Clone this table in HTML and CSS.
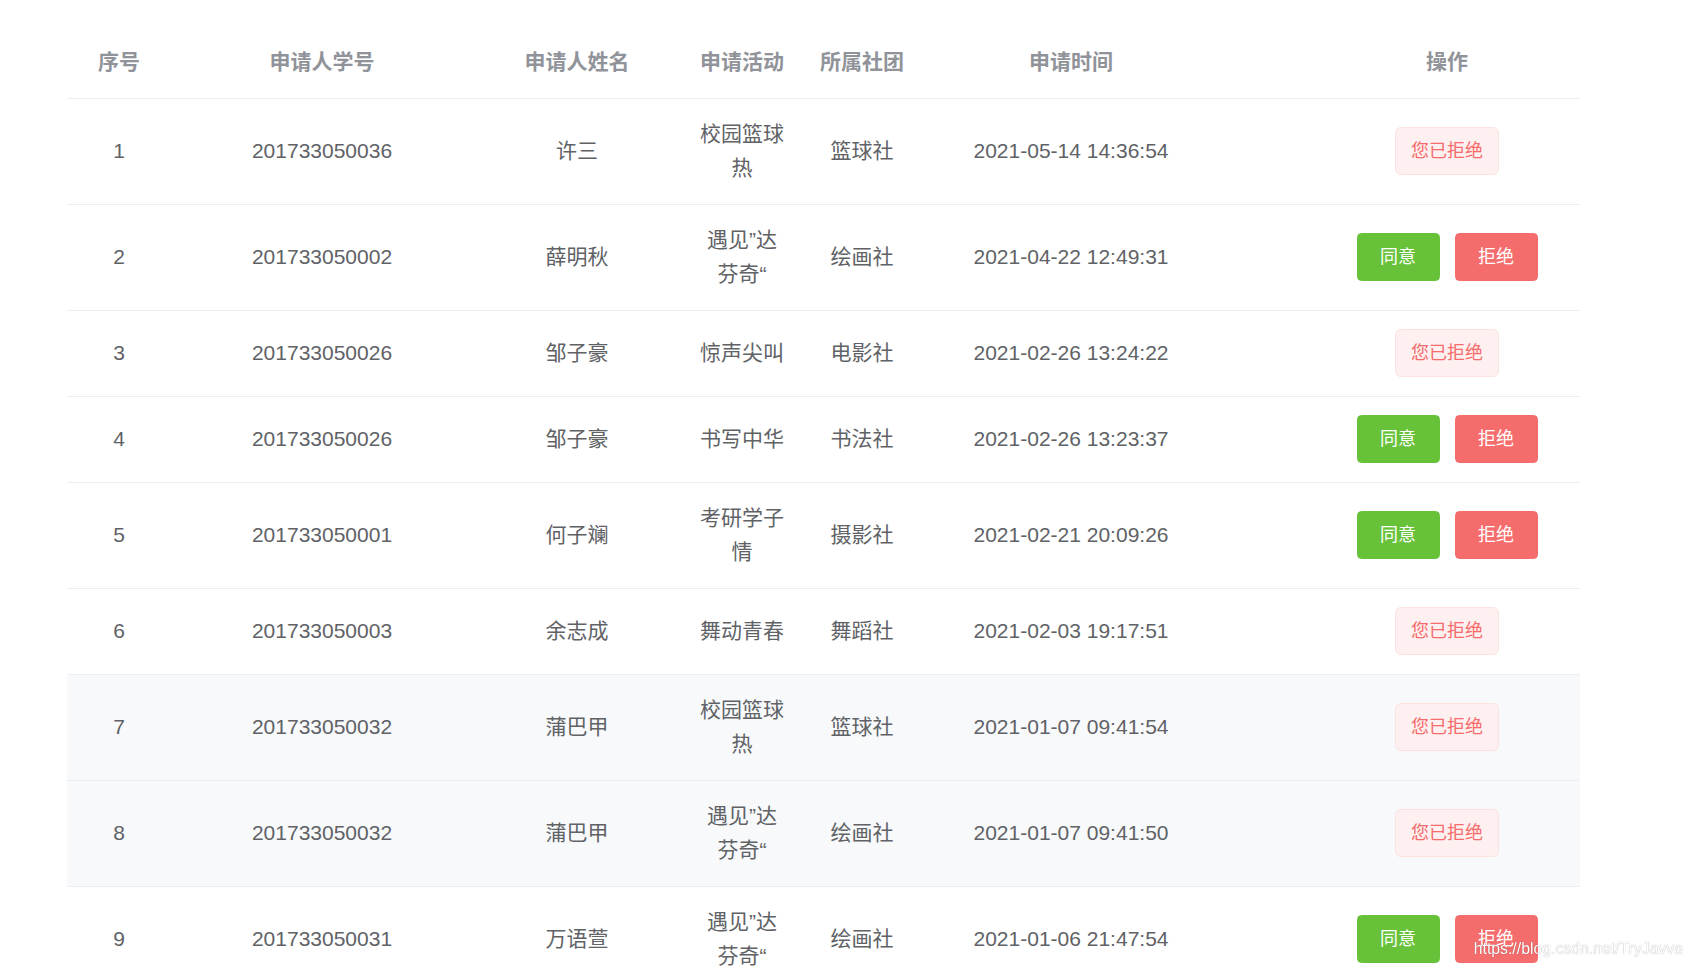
FILE: index.html
```html
<!DOCTYPE html>
<html lang="zh-CN">
<head>
<meta charset="utf-8">
<title>申请列表</title>
<link rel="stylesheet" href="styles.css">
</head>
<body>
<div class="page">
  <table class="grid">
    <colgroup>
      <col class="c-no"><col class="c-id"><col class="c-name"><col class="c-act"><col class="c-club"><col class="c-time"><col class="c-op">
    </colgroup>
    <thead>
      <tr>
        <th><div class="cell">序号</div></th>
        <th><div class="cell">申请人学号</div></th>
        <th><div class="cell">申请人姓名</div></th>
        <th><div class="cell">申请活动</div></th>
        <th><div class="cell">所属社团</div></th>
        <th><div class="cell">申请时间</div></th>
        <th class="op"><div class="cell">操作</div></th>
      </tr>
    </thead>
    <tbody>
      <tr>
        <td><div class="cell">1</div></td>
        <td><div class="cell">201733050036</div></td>
        <td><div class="cell">许三</div></td>
        <td><div class="cell">校园篮球热</div></td>
        <td><div class="cell">篮球社</div></td>
        <td><div class="cell">2021-05-14 14:36:54</div></td>
        <td class="op"><div class="cell ops"><span class="tag">您已拒绝</span></div></td>
      </tr>
      <tr>
        <td><div class="cell">2</div></td>
        <td><div class="cell">201733050002</div></td>
        <td><div class="cell">薛明秋</div></td>
        <td><div class="cell">遇见”达芬奇“</div></td>
        <td><div class="cell">绘画社</div></td>
        <td><div class="cell">2021-04-22 12:49:31</div></td>
        <td class="op"><div class="cell ops"><button class="btn ok">同意</button><button class="btn no">拒绝</button></div></td>
      </tr>
      <tr>
        <td><div class="cell">3</div></td>
        <td><div class="cell">201733050026</div></td>
        <td><div class="cell">邹子豪</div></td>
        <td><div class="cell">惊声尖叫</div></td>
        <td><div class="cell">电影社</div></td>
        <td><div class="cell">2021-02-26 13:24:22</div></td>
        <td class="op"><div class="cell ops"><span class="tag">您已拒绝</span></div></td>
      </tr>
      <tr>
        <td><div class="cell">4</div></td>
        <td><div class="cell">201733050026</div></td>
        <td><div class="cell">邹子豪</div></td>
        <td><div class="cell">书写中华</div></td>
        <td><div class="cell">书法社</div></td>
        <td><div class="cell">2021-02-26 13:23:37</div></td>
        <td class="op"><div class="cell ops"><button class="btn ok">同意</button><button class="btn no">拒绝</button></div></td>
      </tr>
      <tr>
        <td><div class="cell">5</div></td>
        <td><div class="cell">201733050001</div></td>
        <td><div class="cell">何子斓</div></td>
        <td><div class="cell">考研学子情</div></td>
        <td><div class="cell">摄影社</div></td>
        <td><div class="cell">2021-02-21 20:09:26</div></td>
        <td class="op"><div class="cell ops"><button class="btn ok">同意</button><button class="btn no">拒绝</button></div></td>
      </tr>
      <tr>
        <td><div class="cell">6</div></td>
        <td><div class="cell">201733050003</div></td>
        <td><div class="cell">余志成</div></td>
        <td><div class="cell">舞动青春</div></td>
        <td><div class="cell">舞蹈社</div></td>
        <td><div class="cell">2021-02-03 19:17:51</div></td>
        <td class="op"><div class="cell ops"><span class="tag">您已拒绝</span></div></td>
      </tr>
      <tr class="shade">
        <td><div class="cell">7</div></td>
        <td><div class="cell">201733050032</div></td>
        <td><div class="cell">蒲巴甲</div></td>
        <td><div class="cell">校园篮球热</div></td>
        <td><div class="cell">篮球社</div></td>
        <td><div class="cell">2021-01-07 09:41:54</div></td>
        <td class="op"><div class="cell ops"><span class="tag">您已拒绝</span></div></td>
      </tr>
      <tr class="shade">
        <td><div class="cell">8</div></td>
        <td><div class="cell">201733050032</div></td>
        <td><div class="cell">蒲巴甲</div></td>
        <td><div class="cell">遇见”达芬奇“</div></td>
        <td><div class="cell">绘画社</div></td>
        <td><div class="cell">2021-01-07 09:41:50</div></td>
        <td class="op"><div class="cell ops"><span class="tag">您已拒绝</span></div></td>
      </tr>
      <tr>
        <td><div class="cell">9</div></td>
        <td><div class="cell">201733050031</div></td>
        <td><div class="cell">万语萱</div></td>
        <td><div class="cell">遇见”达芬奇“</div></td>
        <td><div class="cell">绘画社</div></td>
        <td><div class="cell">2021-01-06 21:47:54</div></td>
        <td class="op"><div class="cell ops"><button class="btn ok">同意</button><button class="btn no">拒绝</button></div></td>
      </tr>
    </tbody>
  </table>
</div>
<div class="watermark">https://blog.csdn.net/TryJavva</div>
</body>
</html>
```

FILE: styles.css
```css
html, body {
  margin: 0;
  padding: 0;
  background: #fff;
  overflow: hidden;
}
body {
  font-family: "Liberation Sans", "Noto Sans CJK SC", sans-serif;
  color: #606266;
}
.page {
  padding: 27px 0 0 67px;
}
.grid {
  width: 1513px;
  table-layout: fixed;
  border-collapse: collapse;
  border-spacing: 0;
  font-size: 21px;
}
.c-no { width: 104px; }
.c-id { width: 302px; }
.c-name { width: 208px; }
.c-act { width: 122px; }
.c-club { width: 118px; }
.c-time { width: 300px; }
.c-op { width: 359px; }

.grid th,
.grid td {
  padding: 18px 0;
  border-bottom: 1px solid #ebeef5;
  text-align: center;
  vertical-align: middle;
}
.grid th {
  color: #909399;
  font-weight: bold;
}
.cell {
  padding: 0 17px;
  line-height: 34.5px;
  word-break: break-all;
}
.grid .op .cell {
  padding-left: 110px;
}
.shade td {
  background: #f8f9fb;
}
.ops {
  display: flex;
  align-items: center;
  justify-content: center;
  gap: 15px;
  min-height: 49px;
}
.btn {
  height: 48px;
  padding: 0 22.5px;
  border: 1px solid transparent;
  border-radius: 4.5px;
  font-family: "Liberation Sans", "Noto Sans CJK SC", sans-serif;
  font-size: 18px;
  line-height: 1;
  color: #fff;
  cursor: pointer;
}
.ok {
  background: #67c23a;
  border-color: #67c23a;
}
.no {
  background: #f56c6c;
  border-color: #f56c6c;
}
.tag {
  display: inline-block;
  height: 48px;
  box-sizing: border-box;
  padding: 0 15px;
  line-height: 46px;
  font-size: 18px;
  color: #f56c6c;
  background: #fef0f0;
  border: 1px solid #fde2e2;
  border-radius: 6px;
}
.watermark {
  position: fixed;
  right: 10px;
  bottom: 8px;
  font-family: "Liberation Sans", sans-serif;
  font-size: 15.8px;
  line-height: 20px;
  color: #fff;
  text-shadow: 0 0 1px rgba(0, 0, 0, 0.45);
}
```
